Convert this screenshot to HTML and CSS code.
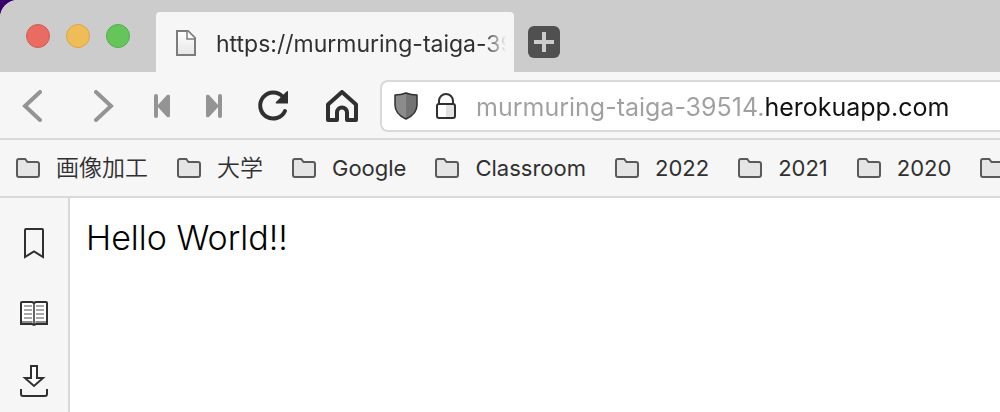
FILE: index.html
```html
<!DOCTYPE html>
<html lang="ja">
<head>
<meta charset="utf-8">
<title>murmuring-taiga-39514.herokuapp.com</title>
<link rel="stylesheet" href="styles.css">
</head>
<body>
<svg class="defs" aria-hidden="true">
  <symbol id="folder" viewBox="0 0 24 20"><path d="M1 3Q1 1 3 1H9.200L11.500 4H21Q23 4 23 6V17Q23 19 21 19H3Q1 19 1 17Z" fill="#e5e5e5" stroke="#5a5a5a" stroke-width="2"/></symbol>
</svg>
<div class="window">
  <header class="tabbar">
    <div class="lights">
      <button class="light close" aria-label="Close"></button>
      <button class="light minimize" aria-label="Minimize"></button>
      <button class="light maximize" aria-label="Maximize"></button>
    </div>
    <div class="tab">
      <svg class="page-icon" width="20" height="26" viewBox="0 0 20 26"><defs><linearGradient id="paper" x2="0" y2="1"><stop stop-color="#fff"/><stop offset="1" stop-color="#e6e6e6"/></linearGradient></defs><path d="M1 1H12L19 8V25H1Z" fill="url(#paper)" stroke="#7c7c7c" stroke-width="2"/><path d="M11 1V9H19" fill="#fff" stroke="#7c7c7c" stroke-width="1.500"/></svg>
      <span class="tab-title">https://murmuring-taiga-39514.herokuapp.com</span>
    </div>
    <button class="new-tab" aria-label="New tab"><svg width="32" height="32" viewBox="0 0 32 32"><path d="M16 6V26M6 16H26" stroke="#ccc" stroke-width="4"/></svg></button>
  </header>

  <nav class="toolbar">
    <button class="tool back" aria-label="Back"><svg viewBox="0 0 32 32"><path d="M24 2L9 16L24 30" fill="none" stroke="#949494" stroke-width="4" stroke-linecap="round"/></svg></button>
    <button class="tool forward" aria-label="Forward"><svg viewBox="0 0 32 32"><path d="M8 2L23 16L8 30" fill="none" stroke="#949494" stroke-width="4" stroke-linecap="round"/></svg></button>
    <button class="tool first" aria-label="Rewind"><svg viewBox="0 0 32 32"><path d="M10 6V26" stroke="#949494" stroke-width="4" stroke-linecap="round"/><path d="M11 16L21 5Q24 4 24 6V26Q24 28 21 27Z" fill="#949494"/></svg></button>
    <button class="tool last" aria-label="Fast forward"><svg viewBox="0 0 32 32"><path d="M22 6V26" stroke="#949494" stroke-width="4" stroke-linecap="round"/><path d="M21 16L11 5Q8 4 8 6V26Q8 28 11 27Z" fill="#949494"/></svg></button>
    <button class="tool reload" aria-label="Reload"><svg viewBox="0 0 32 32"><path d="M26 7A13 13 0 1 0 28 21" fill="none" stroke="#303030" stroke-width="4" stroke-linecap="round"/><path d="M31 1V13.500H20Q18 13.500 19 12L29.500 1.500Z" fill="#303030"/></svg></button>
    <button class="tool home" aria-label="Home"><svg viewBox="0 0 32 32"><path d="M2 14.500L16 2L30 14.500V30H21V22.500A5 5 0 0 0 11 22.500V30H2Z" fill="none" stroke="#303030" stroke-width="4" stroke-linejoin="round"/></svg></button>
    <div class="address">
      <svg class="shield" width="24" height="28" viewBox="0 0 24 28"><path d="M1 3Q7 3 12 1V27Q1 22 1 13Z" fill="#8b8b8b"/><path d="M23 3Q17 3 12 1V27Q23 22 23 13Z" fill="#737373"/><path d="M1 3Q7 3 12 1Q17 3 23 3V13Q23 22 12 27Q1 22 1 13Z" fill="none" stroke="#303030" stroke-width="1.500" stroke-linejoin="round"/></svg>
      <svg class="lock" width="20" height="26" viewBox="0 0 20 26"><rect x="1" y="11" width="18" height="14" rx="2" fill="#fff"/><path d="M10 11H19V25H10Z" fill="#e2e2e2"/><path d="M3 11V8A7 7 0 0 1 17 8V11" fill="none" stroke="#303030" stroke-width="2"/><rect x="1" y="11" width="18" height="14" rx="2" fill="none" stroke="#303030" stroke-width="2"/></svg>
      <input class="url" type="text" aria-label="Address" value="murmuring-taiga-39514.herokuapp.com">
    </div>
  </nav>

  <nav class="bookmarks">
    <button class="bookmark kanji"><svg><use href="#folder"/></svg>画像加工</button>
    <button class="bookmark kanji"><svg><use href="#folder"/></svg>大学</button>
    <button class="bookmark"><svg><use href="#folder"/></svg>Google</button>
    <button class="bookmark"><svg><use href="#folder"/></svg>Classroom</button>
    <button class="bookmark"><svg><use href="#folder"/></svg>2022</button>
    <button class="bookmark"><svg><use href="#folder"/></svg>2021</button>
    <button class="bookmark"><svg><use href="#folder"/></svg>2020</button>
    <button class="bookmark" aria-label="More bookmarks"><svg><use href="#folder"/></svg></button>
  </nav>

  <div class="body">
    <aside class="panel">
      <button class="panel-button" aria-label="Bookmarks"><svg width="28" height="32" viewBox="0 0 28 32"><path d="M5 30V3Q5 2 6 2H22Q23 2 23 3V30L14 24.500Z" fill="none" stroke="#303030" stroke-width="2"/></svg></button>
      <button class="panel-button" aria-label="Reading list"><svg width="28" height="32" viewBox="0 0 28 32"><path d="M2 6H12L14 7L16 6H26Q27 6 27 7V28H16L14 29L12 28H1V7Q1 6 2 6Z" fill="#fff" stroke="#303030" stroke-width="2"/><path d="M2 26H12.500M15.500 26H26" stroke="#8c8c8c" stroke-width="2"/><path d="M14 7V29" stroke="#303030" stroke-width="1.500"/><path d="M4 10H12M4 14H12M4 18H12M4 22H12M16 10H24M16 14H24M16 18H24M16 22H24" stroke="#8c8c8c" stroke-width="1.500"/></svg></button>
      <button class="panel-button" aria-label="Downloads"><svg width="28" height="32" viewBox="0 0 28 32"><path d="M11 1H17V13H23L14 21L5 13H11Z" fill="#fff" stroke="#303030" stroke-width="2"/><path d="M1 24V29Q1 31 3 31H25Q27 31 27 29V24" fill="none" stroke="#303030" stroke-width="2"/></svg></button>
    </aside>
    <main class="page">Hello World!!</main>
  </div>
</div>
</body>
</html>
```
FILE: styles.css
```css
* { box-sizing: border-box; }
body {
  margin: 0;
  background: #3b0068;
  font-family: Inter, "Noto Sans CJK JP", sans-serif;
  color: #303030;
}
button {
  border: 0;
  padding: 0;
  background: none;
  font: inherit;
  color: inherit;
}
svg { display: block; flex: none; }
.defs { display: none; }
.window {
  display: flex;
  flex-direction: column;
  min-height: 100vh;
  overflow: hidden;
  background: #f6f6f6;
  border-top-left-radius: 18px;
}
.tabbar {
  display: flex;
  height: 72px;
  padding-top: 12px;
  background: #ccc;
}
.lights {
  display: flex;
  gap: 16px;
  width: 156px;
  padding: 12px 0 0 26px;
}
.light {
  width: 24px;
  height: 24px;
  border: 1px solid;
  border-radius: 50%;
}
.close { background: #e96b62; border-color: #d35c54; }
.minimize { background: #f0bc57; border-color: #d9a648; }
.maximize { background: #65c55a; border-color: #53ae49; }
.tab {
  display: flex;
  align-items: center;
  gap: 20px;
  width: 358px;
  padding: 2px 8px 0 20px;
  border-radius: 4px 4px 0 0;
  background: #f6f6f6;
}
.tab-title {
  flex: 1;
  overflow: hidden;
  font-size: 23px;
  line-height: 32px;
  padding-top: 2px;
  white-space: nowrap;
  mask-image: linear-gradient(to right, #000 calc(100% - 22px), transparent);
}
.new-tab {
  width: 32px;
  height: 32px;
  margin: 14px 0 0 14px;
  border-radius: 6px;
  background: #505050;
}
.toolbar {
  display: flex;
  align-items: center;
  height: 68px;
  padding: 2px 0 0 16px;
  border-bottom: 2px solid #d9d9d9;
}
.tool { flex: none; width: 32px; height: 32px; }
.tool svg { width: 32px; height: 32px; }
.forward { margin-left: 40px; }
.first { margin-left: 26px; }
.last { margin-left: 20px; }
.reload { margin-left: 27px; }
.home { margin-left: 37px; }
.address {
  display: flex;
  flex: 1;
  align-items: center;
  height: 52px;
  margin-left: 22px;
  padding-left: 12px;
  border: 2px solid #d9d9d9;
  border-right: 0;
  border-radius: 8px 0 0 8px;
  background: #fff;
}
.lock { margin: 0 20px 0 18px; }
.url {
  flex: 1;
  min-width: 0;
  height: 40px;
  padding: 2px 0 0;
  border: 0;
  outline: 0;
  font: 25px Inter, sans-serif;
  color: transparent;
  background: linear-gradient(to right, #a0a0a0 289px, #111 289px);
  background-clip: text;
  -webkit-background-clip: text;
}
.bookmarks {
  display: flex;
  align-items: center;
  gap: 29px;
  height: 58px;
  padding-left: 16px;
  overflow: hidden;
  border-bottom: 2px solid #d9d9d9;
}
.bookmark {
  display: flex;
  flex: none;
  align-items: center;
  gap: 16px;
  font-size: 22px;
  line-height: 32px;
}
.kanji { font-size: 23px; font-weight: 350; }
.bookmark svg { width: 24px; height: 20px; }
.body { display: flex; flex: 1; }
.panel {
  display: flex;
  flex-direction: column;
  align-items: center;
  gap: 37px;
  width: 70px;
  padding-top: 29px;
  border-right: 2px solid #d9d9d9;
}
.panel-button { width: 28px; height: 32px; }
.page {
  flex: 1;
  padding: 16px;
  background: #fff;
  color: #000;
  font-size: 34px;
  font-weight: 350;
  line-height: 48px;
}
```
